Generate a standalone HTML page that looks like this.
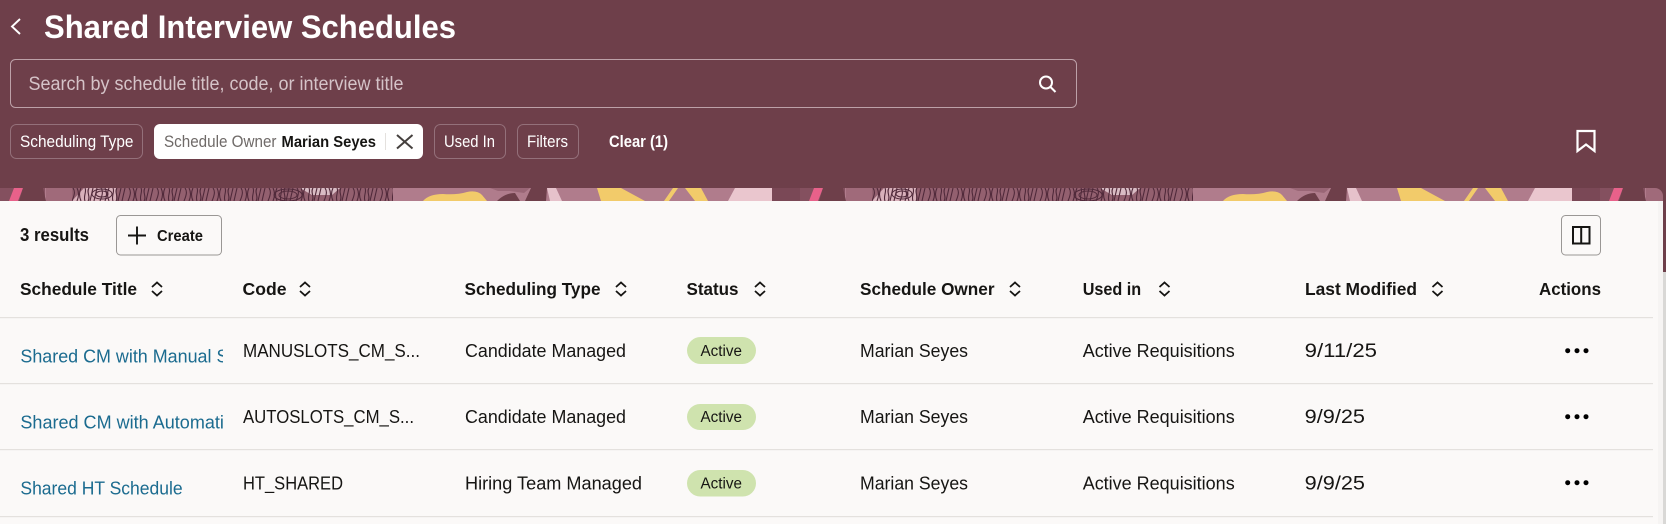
<!DOCTYPE html>
<html lang="en">
<head>
<meta charset="utf-8">
<title>Shared Interview Schedules</title>
<style>
html,body{margin:0;padding:0;width:1666px;height:524px;overflow:hidden;background:#fbf9f8}
svg{display:block;position:absolute;left:0;top:0}
text{font-family:"Liberation Sans",Arial,sans-serif;fill:#161513}
.b{font-weight:700}
.r{font-size:18.5px}
.d{font-size:19px}
.h{font-size:17.5px;font-weight:700}
.w{fill:#fff}
.c{font-size:16.5px;fill:#fff}
.l{fill:#1b6b8f;font-size:18.5px}
.a{font-size:15.5px}
.s{fill:none;stroke:#161513;stroke-width:1.8}
</style>
</head>
<body>
<svg width="1666" height="524" viewBox="0 0 1666 524" xmlns="http://www.w3.org/2000/svg">
<defs>
<pattern id="fp" width="28" height="13" patternUnits="userSpaceOnUse">
<path d="M1 0c2 4-2 8 0 13M5 0c-3 4 2 9-1 13M9 0L6 13M13 0l-3 13M17 0c2 3 2 6-1 13M21 0q3 6 0 13M25 0q-3 6 0 13" fill="none" stroke="#50293a" stroke-width="1.100"/>
</pattern>
<pattern id="band" x="0" y="188" width="800" height="13" patternUnits="userSpaceOnUse">
<rect width="800" height="13" fill="#b07c8c"/>
<rect x="0" width="45" height="13" fill="#84505f"/>
<path d="M14 0h9l-5 13H9z" fill="#e8618a"/>
<path d="M23 0h20l3 13H19z" fill="#6e3f4a"/>
<rect x="46" width="28" height="13" fill="#a06a7a"/>
<rect x="72" width="321" height="13" fill="#93606f"/>
<path d="M84 0h32v13H72z" fill="#d8b0ba"/>
<path d="M300 0h40l-8 7-20 0z" fill="#d9bcc4"/>
<rect x="72" width="321" height="13" fill="url(#fp)"/>
<g fill="none" stroke="#50293a" stroke-width="1">
<ellipse cx="102" cy="6" rx="10" ry="5"/><ellipse cx="102" cy="6" rx="6" ry="3"/>
<ellipse cx="288" cy="7" rx="14" ry="6"/><ellipse cx="288" cy="7" rx="9" ry="4"/>
</g>
<path d="M423 13q6-7 20-7 14 1 24-2 10-2 15 3l5 6z" fill="#f2cb6a"/>
<path d="M497 13q8-8 18-8l5 8z" fill="#6e3f4a"/>
<path d="M490 0h40l-6 5-14-2-12 0z" fill="#9a6676"/>
<path d="M531 0h16l-1 13h-21z" fill="#6e3f4a"/>
<path d="M547 0h9l6 13h-12z" fill="#e6c2cb"/>
<path d="M597 0h24l24 13h-44z" fill="#f2cb6a"/>
<path d="M673 0h5l-9 13h-5z" fill="#f2cb6a"/>
<path d="M685 0h16l7 13h-13z" fill="#f2cb6a"/>
<path d="M735 0h37l5 13h-49z" fill="#eac6ce"/>
<rect x="772" width="28" height="13" fill="#7a4856"/>
</pattern>
</defs>

<!-- header -->
<rect width="1666" height="272" fill="#6e3f4a"/>
<rect x="1663" y="272" width="3" height="252" fill="#d9d8d6"/>
<rect x="0" y="188" width="1663" height="13" fill="url(#band)"/>
<path d="M1655 188h8v8a8 8 0 0 0-8-8z" fill="#6e3f4a"/>
<rect x="0" y="201" width="1663" height="323" fill="#fbf9f8"/>
<rect x="1658" y="201" width="5" height="323" fill="#f6f4f3"/>

<path d="M20 19l-8 7.500 8 7.500" fill="none" stroke="#fff" stroke-width="1.900"/>
<text class="b w" x="44" y="38" font-size="32" textLength="412" lengthAdjust="spacingAndGlyphs">Shared Interview Schedules</text>

<rect x="10.500" y="59.500" width="1066" height="48" rx="5" fill="none" stroke="#bda1a8" stroke-width="1"/>
<text x="28.500" y="90" font-size="19" style="fill:#d5c3c8" textLength="375" lengthAdjust="spacingAndGlyphs">Search by schedule title, code, or interview title</text>
<circle cx="1046" cy="82.500" r="6" fill="none" stroke="#fff" stroke-width="2"/>
<path d="M1050.500 87l5 5" stroke="#fff" stroke-width="2"/>

<!-- chips -->
<g fill="none" stroke="#94707a" stroke-width="1">
<rect x="10.500" y="124.500" width="132" height="34" rx="6"/>
<rect x="434.500" y="124.500" width="71" height="34" rx="6"/>
<rect x="517.500" y="124.500" width="61" height="34" rx="6"/>
</g>
<rect x="154" y="124" width="269" height="35" rx="6" fill="#fff"/>
<text class="c" x="20" y="147" textLength="113.500" lengthAdjust="spacingAndGlyphs">Scheduling Type</text>
<text x="164" y="147" font-size="16.500" style="fill:#6f6a68" textLength="112.500" lengthAdjust="spacingAndGlyphs">Schedule Owner</text>
<text class="b" x="281.500" y="147" font-size="15.500" textLength="94.500" lengthAdjust="spacingAndGlyphs">Marian Seyes</text>
<path d="M385.500 133v17" stroke="#e4e1de" stroke-width="1"/>
<path d="M397 135l15.500 13.500M412.500 135L397 148.500" stroke="#45403e" stroke-width="2" fill="none"/>
<text class="c" x="444" y="147" textLength="51" lengthAdjust="spacingAndGlyphs">Used In</text>
<text class="c" x="527" y="147" textLength="41" lengthAdjust="spacingAndGlyphs">Filters</text>
<text class="c b" x="609" y="147" font-size="16" textLength="59" lengthAdjust="spacingAndGlyphs">Clear (1)</text>

<path d="M1577.500 131h17v20l-8.500-6.500-8.500 6.500z" fill="none" stroke="#fff" stroke-width="2.200"/>

<!-- toolbar -->
<text class="b" x="20" y="241" font-size="18" textLength="69" lengthAdjust="spacingAndGlyphs">3 results</text>
<rect x="116.500" y="215.500" width="105" height="39.500" rx="4" fill="none" stroke="#9a9795" stroke-width="1"/>
<path d="M128 235.500h18M137 226.500v18" stroke="#161513" stroke-width="1.900"/>
<text class="b" x="157" y="241" font-size="15.500" textLength="46" lengthAdjust="spacingAndGlyphs">Create</text>
<rect x="1561.500" y="215.500" width="39" height="39.500" rx="4" fill="none" stroke="#9a9795" stroke-width="1"/>
<path d="M1573 227h16.500v16.500H1573zM1581.200 227v16.500" fill="none" stroke="#161513" stroke-width="2"/>

<!-- header row -->
<g>
<text class="h" x="20" y="295" textLength="117" lengthAdjust="spacingAndGlyphs">Schedule Title</text>
<text class="h" x="242.500" y="295" textLength="44" lengthAdjust="spacingAndGlyphs">Code</text>
<text class="h" x="464.500" y="295" textLength="136" lengthAdjust="spacingAndGlyphs">Scheduling Type</text>
<text class="h" x="686.500" y="295" textLength="52" lengthAdjust="spacingAndGlyphs">Status</text>
<text class="h" x="860" y="295" textLength="134.500" lengthAdjust="spacingAndGlyphs">Schedule Owner</text>
<text class="h" x="1082.700" y="295" textLength="58.500" lengthAdjust="spacingAndGlyphs">Used in</text>
<text class="h" x="1305" y="295" textLength="112" lengthAdjust="spacingAndGlyphs">Last Modified</text>
<text class="h" x="1539" y="295" textLength="62" lengthAdjust="spacingAndGlyphs">Actions</text>
</g>
<g class="s">
<path d="M152 287l5-4.500 5 4.500M152 291l5 4.500 5-4.500"/>
<path d="M300 287l5-4.500 5 4.500M300 291l5 4.500 5-4.500"/>
<path d="M616 287l5-4.500 5 4.500M616 291l5 4.500 5-4.500"/>
<path d="M755 287l5-4.500 5 4.500M755 291l5 4.500 5-4.500"/>
<path d="M1010 287l5-4.500 5 4.500M1010 291l5 4.500 5-4.500"/>
<path d="M1159.500 287l5-4.500 5 4.500M1159.500 291l5 4.500 5-4.500"/>
<path d="M1432.500 287l5-4.500 5 4.500M1432.500 291l5 4.500 5-4.500"/>
</g>

<!-- row lines -->
<g fill="#e4e1de">
<rect x="0" y="317" width="1653" height="1.200"/>
<rect x="0" y="383" width="1653" height="1.200"/>
<rect x="0" y="449" width="1653" height="1.200"/>
<rect x="0" y="516" width="1653" height="1.200"/>
</g>

<!-- row 1 -->
<svg x="0" y="330" width="223" height="60">
<text class="l" x="20.400" y="32.500" textLength="208" lengthAdjust="spacingAndGlyphs">Shared CM with Manual S</text>
</svg>
<text class="r" x="243" y="357" textLength="177" lengthAdjust="spacingAndGlyphs">MANUSLOTS_CM_S...</text>
<text class="r" x="465" y="357" textLength="161" lengthAdjust="spacingAndGlyphs">Candidate Managed</text>
<rect x="687" y="337" width="69" height="27" rx="13.500" fill="#cfe3ae"/>
<text class="a" x="700.500" y="356" textLength="41.500" lengthAdjust="spacingAndGlyphs">Active</text>
<text class="r" x="860" y="357" textLength="108" lengthAdjust="spacingAndGlyphs">Marian Seyes</text>
<text class="r" x="1082.700" y="357" textLength="152" lengthAdjust="spacingAndGlyphs">Active Requisitions</text>
<text class="d" x="1304.700" y="357" textLength="72.300" lengthAdjust="spacingAndGlyphs">9/11/25</text>
<circle cx="1567.700" cy="350.700" r="2.500"/><circle cx="1577" cy="350.700" r="2.500"/><circle cx="1586" cy="350.700" r="2.500"/>

<!-- row 2 -->
<svg x="0" y="396" width="223" height="60">
<text class="l" x="20.400" y="32.500" textLength="203.500" lengthAdjust="spacingAndGlyphs">Shared CM with Automati</text>
</svg>
<text class="r" x="243" y="423" textLength="171" lengthAdjust="spacingAndGlyphs">AUTOSLOTS_CM_S...</text>
<text class="r" x="465" y="423" textLength="161" lengthAdjust="spacingAndGlyphs">Candidate Managed</text>
<rect x="687" y="404" width="69" height="26" rx="13" fill="#cfe3ae"/>
<text class="a" x="700.500" y="422" textLength="41.500" lengthAdjust="spacingAndGlyphs">Active</text>
<text class="r" x="860" y="423" textLength="108" lengthAdjust="spacingAndGlyphs">Marian Seyes</text>
<text class="r" x="1082.700" y="423" textLength="152" lengthAdjust="spacingAndGlyphs">Active Requisitions</text>
<text class="d" x="1304.700" y="423" textLength="60.300" lengthAdjust="spacingAndGlyphs">9/9/25</text>
<circle cx="1567.700" cy="416.700" r="2.500"/><circle cx="1577" cy="416.700" r="2.500"/><circle cx="1586" cy="416.700" r="2.500"/>

<!-- row 3 -->
<text class="l" x="20.400" y="494.500" textLength="162.200" lengthAdjust="spacingAndGlyphs">Shared HT Schedule</text>
<text class="r" x="243" y="489.500" textLength="100" lengthAdjust="spacingAndGlyphs">HT_SHARED</text>
<text class="r" x="465" y="489.500" textLength="177" lengthAdjust="spacingAndGlyphs">Hiring Team Managed</text>
<rect x="687" y="470" width="69" height="26.500" rx="13.200" fill="#cfe3ae"/>
<text class="a" x="700.500" y="488.500" textLength="41.500" lengthAdjust="spacingAndGlyphs">Active</text>
<text class="r" x="860" y="489.500" textLength="108" lengthAdjust="spacingAndGlyphs">Marian Seyes</text>
<text class="r" x="1082.700" y="489.500" textLength="152" lengthAdjust="spacingAndGlyphs">Active Requisitions</text>
<text class="d" x="1304.700" y="489.500" textLength="60.300" lengthAdjust="spacingAndGlyphs">9/9/25</text>
<circle cx="1567.700" cy="482.700" r="2.500"/><circle cx="1577" cy="482.700" r="2.500"/><circle cx="1586" cy="482.700" r="2.500"/>
</svg>
</body>
</html>
